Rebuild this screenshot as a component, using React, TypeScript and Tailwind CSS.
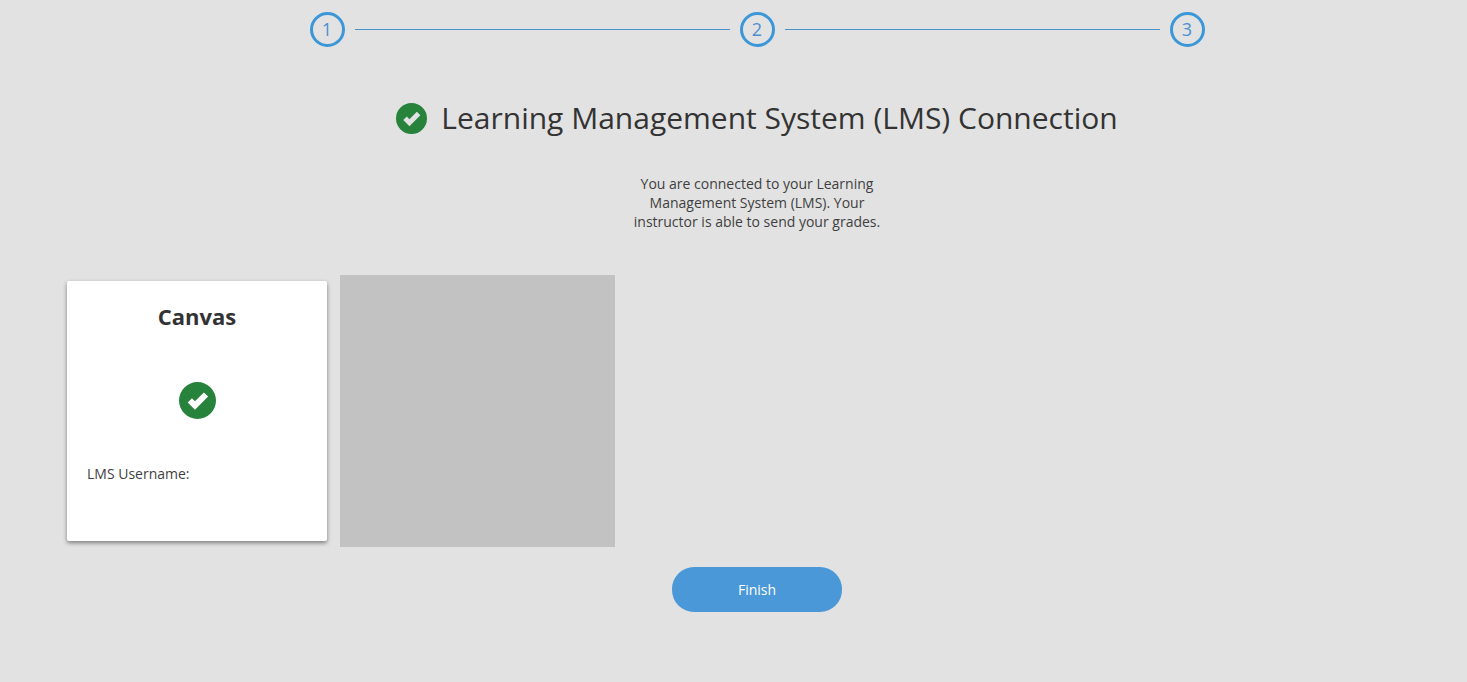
function CheckCircle({ className }: { className: string }) {
    return (
        <svg viewBox="0 0 37 37" fill="currentColor" className={className}>
            <path
                fillRule="evenodd"
                d="M18.5 0a18.5 18.5 0 1 0 0 37a18.5 18.500 0 1 0 0-37zM12.920 16.180L16 19.260L24.880 10.380L29.120 14.620L16 27.740L8.680 20.420z"
            />
        </svg>
    );
}

function Step({ n }: { n: number }) {
    return (
        <div className="w-[35px] h-[35px] shrink-0 rounded-full border-[3px] border-[#3c97d9] flex items-center justify-center text-[18px] text-[#4a90d2]">
            {n}
        </div>
    );
}

function Line() {
    return <div className="flex-1 h-px mx-[10px] bg-[#4a93c8]" />;
}

export default function App() {
    return (
        <div className="min-h-[682px] bg-[#e2e2e2] pl-[67px] pr-[20px] pt-[12px] text-[#333333] font-['Open_Sans',sans-serif]">
            <div className="flex items-center w-[895px] mx-auto">
                <Step n={1} />
                <Line />
                <Step n={2} />
                <Line />
                <Step n={3} />
            </div>

            <div className="flex items-center justify-center gap-[14px] mt-[36px] h-[70px]">
                <CheckCircle className="w-[31px] h-[31px] text-[#27823b]" />
                <h1 className="text-[30px] leading-[40px]">Learning Management System (LMS) Connection</h1>
            </div>

            <p className="w-[260px] mx-auto mt-[21px] text-center text-[14px] leading-[19px] text-[#3f3f3f]">
                You are connected to your Learning Management System (LMS). Your instructor is able to send your grades.
            </p>

            <div className="flex items-center gap-[13px] mt-[44px]">
                <div className="w-[260px] h-[260px] bg-white rounded-[2px] shadow-[0_2px_4px_rgba(0,0,0,0.45)] flex flex-col">
                    <h2 className="text-[22px] leading-[30px] font-bold text-center mt-[20px]">Canvas</h2>
                    <CheckCircle className="w-[37px] h-[37px] mx-auto mt-[51px] text-[#27823b]" />
                    <p className="text-[14px] leading-[19px] text-[#3f3f3f] ml-[20px] mt-[45px]">LMS Username:</p>
                </div>
                <div className="w-[275px] h-[272px] bg-[#c2c2c2]" />
            </div>

            <div className="flex justify-center mt-[20px]">
                <button className="w-[170px] h-[45px] rounded-[22px] bg-[#4a98d8] text-white text-[14px]">Finish</button>
            </div>
        </div>
    );
}
